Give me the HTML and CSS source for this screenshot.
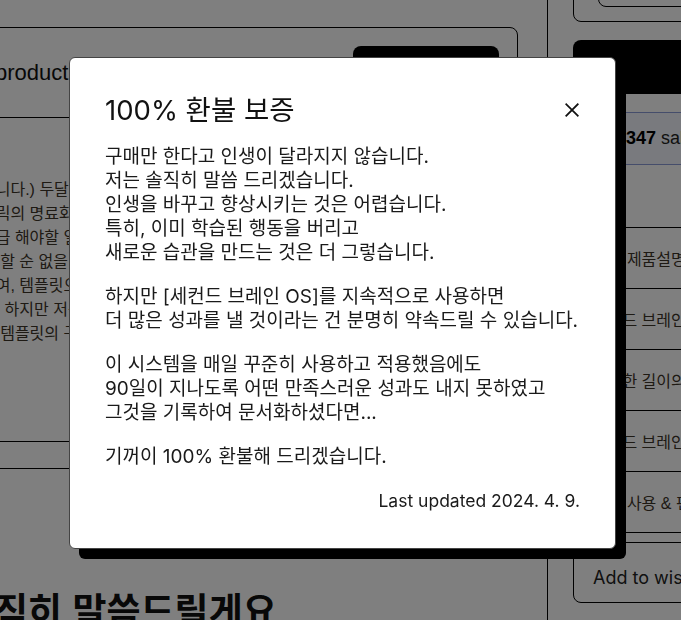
FILE: index.html
```html
<!DOCTYPE html>
<html lang="ko">
<head>
<meta charset="utf-8">
<title>100% 환불 보증</title>
<link rel="stylesheet" href="styles.css">
</head>
<body>
<div class="page">
  <main class="main-col">
    <section class="product-card">
      <header class="card-head">
        <h2 class="card-title">product</h2>
        <a class="buy-btn">구매하기</a>
      </header>
      <div class="card-body">
        <p class="card-text">습니다.) 두달 동안 매일 사용하며 검증했습니다<br>클릭의 명료화와 구조화를 돕습니다<br>긴급 해야할 일과 중요한 일을 나눕니다<br>다 할 순 없을 때 우선순위를 정합니다<br>하여, 템플릿으로 정리했습니다<br>요. 하지만 저는 다릅니다<br>의 템플릿의 구성은 이렇습니다</p>
      </div>
      <div class="card-foot"></div>
    </section>
    <h2 class="honest">솔직히 말씀드릴게요</h2>
  </main>
  <aside class="side-col">
    <div class="price-card"><div class="price-input"></div></div>
    <a class="side-buy">지금 구매하기</a>
    <div class="sales-box"><b>1,347</b>&nbsp;sales</div>
    <ul class="feature-list">
      <li>노션 제품설명서</li>
      <li>세컨드 브레인 OS</li>
      <li>다양한 길이의 영상</li>
      <li>세컨드 브레인 가이드</li>
      <li>쉬운 사용 &amp; 편리한 구성</li>
    </ul>
    <button class="wish-btn" type="button">Add to wishlist</button>
  </aside>
</div>

<div class="overlay"></div>

<div class="modal" role="dialog" aria-labelledby="modal-title">
  <div class="modal-head">
    <h1 class="modal-title" id="modal-title">100% 환불 보증</h1>
    <button class="close" type="button" aria-label="닫기">
      <svg viewBox="0 0 16 16" width="16" height="16"><path d="M2.3 2.3 L13.7 13.7 M13.7 2.3 L2.3 13.7" stroke="#111" stroke-width="1.8" stroke-linecap="square" fill="none"/></svg>
    </button>
  </div>
  <div class="modal-body">
    <p>구매만 한다고 인생이 달라지지 않습니다.<br>저는 솔직히 말씀 드리겠습니다.<br>인생을 바꾸고 향상시키는 것은 어렵습니다.<br>특히, 이미 학습된 행동을 버리고<br>새로운 습관을 만드는 것은 더 그렇습니다.</p>
    <p>하지만 [세컨드 브레인 OS]를 지속적으로 사용하면<br>더 많은 성과를 낼 것이라는 건 분명히 약속드릴 수 있습니다.</p>
    <p>이 시스템을 매일 꾸준히 사용하고 적용했음에도<br>90일이 지나도록 어떤 만족스러운 성과도 내지 못하였고<br>그것을 기록하여 문서화하셨다면...</p>
    <p>기꺼이 100% 환불해 드리겠습니다.</p>
    <p class="updated">Last updated 2024. 4. 9.</p>
  </div>
</div>
</body>
</html>
```

FILE: styles.css
```css
* { box-sizing: border-box; }
html, body { margin: 0; height: 100%; overflow: hidden; }
body {
  background: #fff;
  color: #111;
  font-family: Inter, "Noto Sans CJK KR", sans-serif;
}

/* background page */
.page {
  display: flex;
  align-items: flex-start;
  margin-left: -40px;
  width: 1100px;
}
.main-col {
  flex: none;
  width: 558px;
  padding-top: 27px;
}
.product-card {
  border: 1px solid #000;
  border-radius: 8px;
}
.card-head {
  display: flex;
  align-items: center;
  justify-content: space-between;
  height: 90px;
  padding: 0 18px 0 34px;
  border-bottom: 1px solid #000;
}
.card-title {
  margin: 0;
  font: 400 22px "Liberation Sans", "Noto Sans CJK KR", sans-serif;
}
.buy-btn {
  display: flex;
  align-items: center;
  justify-content: center;
  width: 146px;
  height: 53px;
  background: #000;
  color: #fff;
  border-radius: 8px;
  font-size: 16px;
}
.card-body {
  padding: 60px 0 95px 20px;
  border-bottom: 1px solid #000;
}
.card-text {
  margin: 0;
  font: 16px/24px "Liberation Sans", "Noto Sans CJK KR", sans-serif;
  color: #3d3428;
  white-space: nowrap;
}
.card-foot { height: 26px; }
.honest {
  margin: 116px 0 0;
  font: 700 37px/48px "Noto Sans CJK KR", sans-serif;
  color: #111;
  white-space: nowrap;
}

.side-col {
  flex: none;
  width: 360px;
  min-height: 700px;
  margin-left: 29px;
  padding-left: 25px;
  border-left: 1px solid #000;
}
.price-card {
  display: flex;
  align-items: flex-end;
  margin-top: -60px;
  height: 82px;
  padding: 0 0 14px 24px;
  border: 1px solid #000;
  border-radius: 8px;
}
.price-input {
  width: 220px;
  height: 40px;
  border: 1px solid #000;
  border-radius: 8px;
}
.side-buy {
  display: block;
  margin-top: 18px;
  height: 54px;
  line-height: 54px;
  text-align: center;
  background: #000;
  color: #fff;
  border-radius: 8px;
  font-size: 18px;
}
.sales-box {
  display: flex;
  align-items: center;
  margin-top: 18px;
  height: 53px;
  padding-left: 38px;
  background: #f2f5fc;
  border-top: 1px solid #8a9ad6;
  border-bottom: 1px solid #8a9ad6;
  font: 18px "Liberation Sans", sans-serif;
  color: #222;
}
.sales-box b { color: #000; }
.feature-list {
  margin: 62px 0 0;
  padding: 0;
  list-style: none;
  border-top: 1px solid #000;
}
.feature-list li {
  display: flex;
  align-items: center;
  height: 61px;
  padding-left: 20px;
  border-bottom: 1px solid #000;
  font: 16px "Liberation Sans", "Noto Sans CJK KR", sans-serif;
  color: #3d3428;
  white-space: nowrap;
}
.wish-btn {
  display: block;
  width: 100%;
  margin-top: 9px;
  height: 61px;
  padding: 10px 0 0 19px;
  text-align: left;
  background: transparent;
  border: 1px solid #000;
  border-radius: 8px;
  font: 18px Inter, sans-serif;
  color: #222;
}

/* overlay + modal */
.overlay {
  position: fixed;
  inset: 0;
  background: rgba(0, 0, 0, 0.5);
}
.modal {
  position: fixed;
  left: 69px;
  top: 57px;
  width: 547px;
  height: 492px;
  padding: 36px 35px;
  background: #fff;
  border: 1px solid #444;
  border-radius: 6px;
  box-shadow: 10px 10px 0 #000;
}
.modal-head {
  display: flex;
  align-items: center;
  justify-content: space-between;
  margin-bottom: 19px;
}
.modal-title {
  margin: 0;
  font-size: 27.5px;
  font-weight: 400;
  line-height: 32px;
  color: #111;
}
.close {
  display: flex;
  width: 16px;
  height: 16px;
  padding: 0;
  border: 0;
  background: none;
}
.modal-body p {
  margin: 0 0 20px;
  font-size: 19px;
  line-height: 24px;
  color: #1a1a1a;
  white-space: nowrap;
}
.modal-body .updated {
  margin: 0;
  text-align: right;
  font-size: 17.5px;
}
```
